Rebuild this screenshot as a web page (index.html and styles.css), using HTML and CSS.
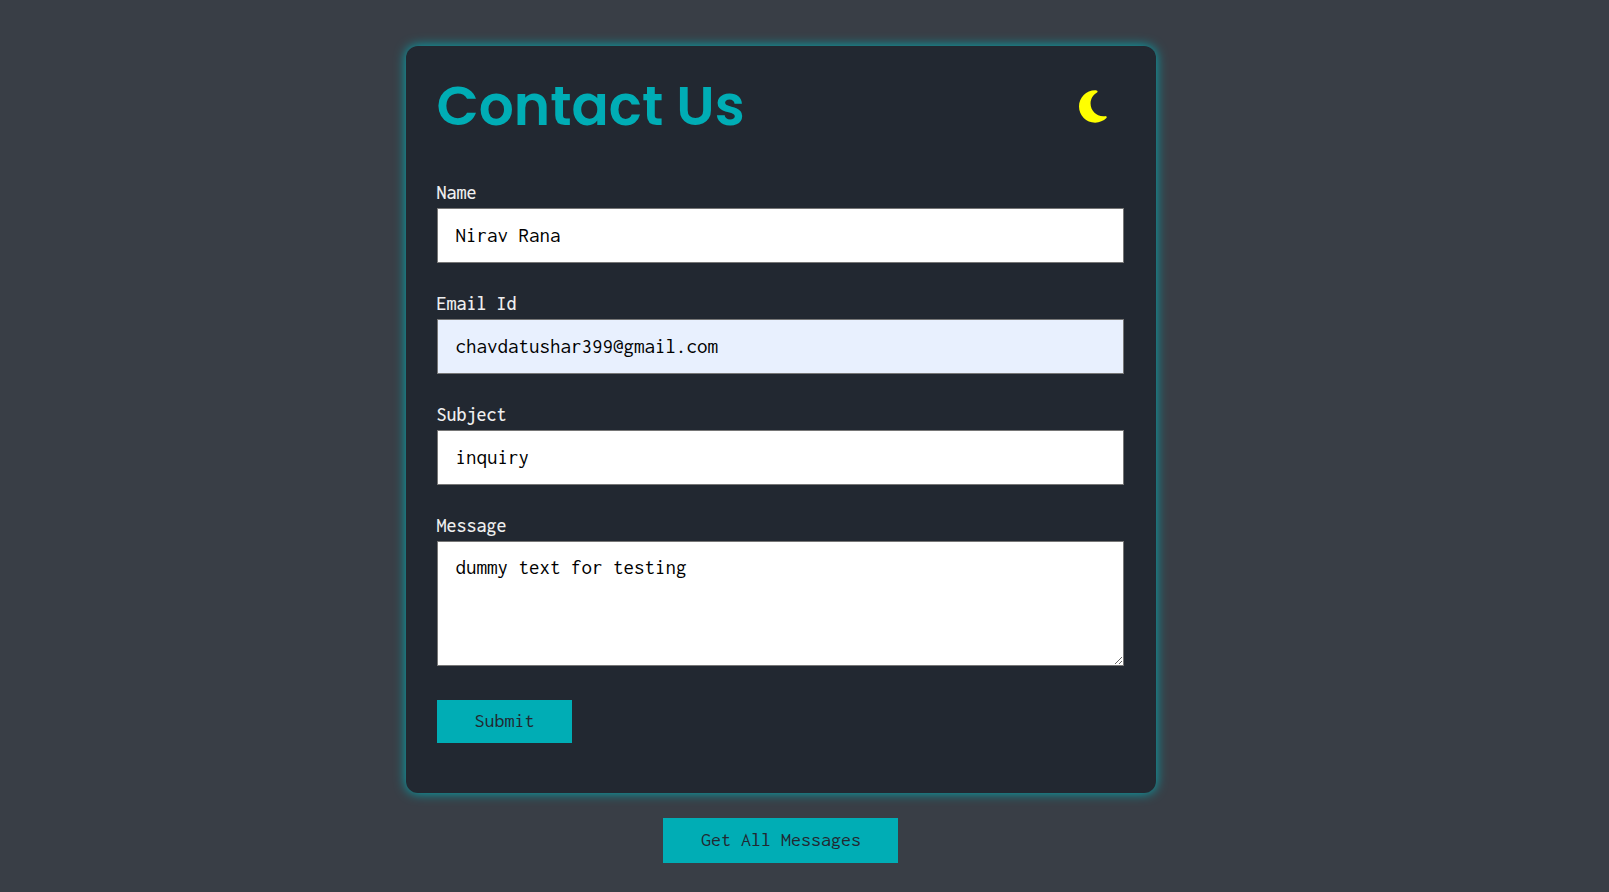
FILE: index.html
```html
<!DOCTYPE html>
<html lang="en">
<head>
  <meta charset="utf-8">
  <meta name="viewport" content="width=device-width, initial-scale=1">
  <title>Contact Us</title>
  <link rel="stylesheet" href="styles.css">
</head>
<body>
  <main class="page">
    <section class="card">
      <header class="card-header">
        <h1 class="title">Contact Us</h1>
        <button class="theme-toggle" type="button" aria-label="Toggle dark mode">
          <svg class="moon" viewBox="0 0 384 512" aria-hidden="true"><path d="M223.500 32C100 32 0 132.300 0 256S100 480 223.500 480c60.600 0 115.500-24.200 155.800-63.400c5-4.900 6.300-12.500 3.100-18.700s-10.100-9.700-17-8.500c-9.800 1.700-19.800 2.600-30.100 2.600c-96.900 0-175.500-78.800-175.500-176c0-65.800 36-123.100 89.300-153.300c6.100-3.500 9.200-10.500 7.700-17.300s-7.300-11.900-14.300-12.500c-6.300-.5-12.600-.8-19-.8z"/></svg>
        </button>
      </header>
      <form class="form">
        <div class="field">
          <label class="label" for="name">Name</label>
          <input class="control" id="name" type="text" value="Nirav Rana">
        </div>
        <div class="field">
          <label class="label" for="email">Email Id</label>
          <input class="control control-filled" id="email" type="email" value="chavdatushar399@gmail.com">
        </div>
        <div class="field">
          <label class="label" for="subject">Subject</label>
          <input class="control" id="subject" type="text" value="inquiry">
        </div>
        <div class="field">
          <label class="label" for="message">Message</label>
          <textarea class="control control-area" id="message">dummy text for testing</textarea>
        </div>
        <button class="button button-submit" type="submit">Submit</button>
      </form>
    </section>
    <button class="button button-all" type="button">Get All Messages</button>
  </main>
</body>
</html>
```
FILE: styles.css
```css
* {
  box-sizing: border-box;
}

body {
  margin: 0;
  min-height: 100vh;
  background: #393e46;
  color: #eeeeee;
  font-family: Inconsolata, "Noto Sans Mono CJK SC", "Liberation Mono", monospace;
}

.page {
  display: flex;
  flex-direction: column;
  align-items: center;
  gap: 25px;
  padding: 46px 48px 24px 0;
}

.card {
  width: 100%;
  max-width: 750px;
  padding: 24px 32px 50px 31px;
  border-radius: 12px;
  background: #222831;
  box-shadow: 0 0 12px #00adb5;
}

.card-header {
  display: flex;
  align-items: center;
  justify-content: space-between;
  padding-right: 17px;
}

.title {
  margin: 0;
  color: #00adb5;
  font-family: Poppins, Inter, sans-serif;
  font-size: 55px;
  font-weight: 600;
  line-height: 72px;
}

.theme-toggle {
  display: flex;
  padding: 0;
  border: 0;
  background: none;
  cursor: pointer;
}

.moon {
  height: 37px;
  fill: #ffff00;
}

.form {
  display: flex;
  flex-direction: column;
  align-items: flex-start;
  gap: 28px;
  padding-top: 38px;
}

.field {
  display: flex;
  flex-direction: column;
  width: 100%;
}

.label {
  font-size: 20px;
  font-weight: 500;
  line-height: 26px;
  padding-bottom: 2px;
}

.control {
  width: 100%;
  height: 55px;
  padding: 0 18px 2px;
  border: 1px solid #767676;
  border-radius: 0;
  background: #ffffff;
  color: #000000;
  font-family: inherit;
  font-size: 21px;
  line-height: 24px;
}

.control-filled {
  background: #e8f0fe;
}

.control-area {
  height: 125px;
  padding: 13px 18px;
  resize: both;
}

.button {
  height: 43px;
  padding: 0 37px 2px 38px;
  border: 0;
  background: #00adb5;
  color: #222831;
  font-family: inherit;
  font-size: 20px;
  line-height: 24px;
  cursor: pointer;
}

.button-submit {
  margin-top: 6px;
}

.button-all {
  height: 45px;
}
```
